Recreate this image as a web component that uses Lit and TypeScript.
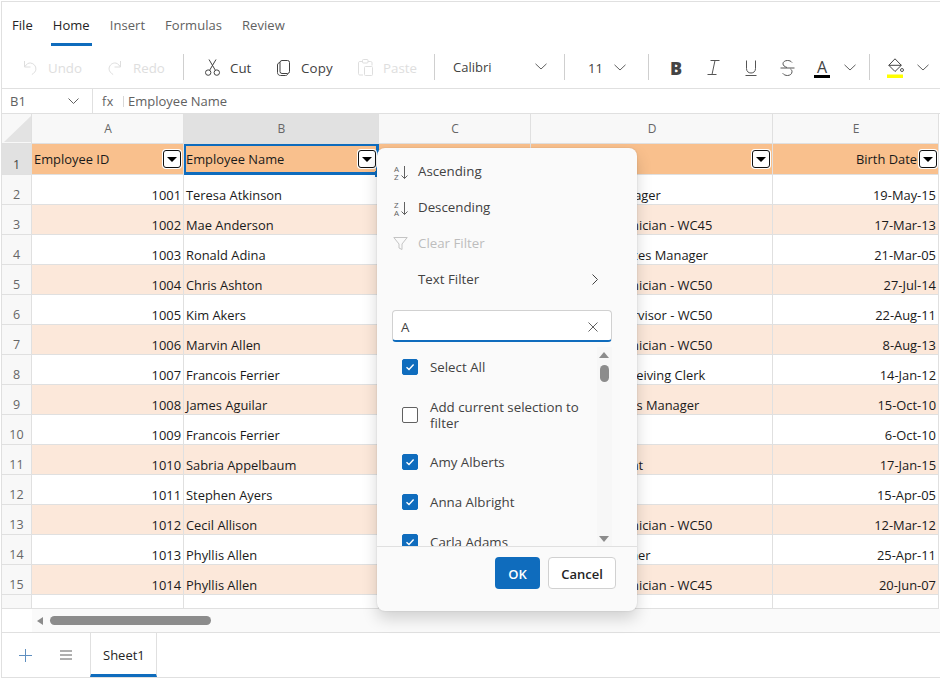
import { LitElement, html, css, svg } from "lit";
import { customElement } from "lit/decorators.js";

const rows: [number, string, string, string][] = [
  [1001, "Teresa Atkinson", "Engineering Manager", "19-May-15"],
  [1002, "Mae Anderson", "Production Technician - WC45", "17-Mar-13"],
  [1003, "Ronald Adina", "Production Services Manager", "21-Mar-05"],
  [1004, "Chris Ashton", "Production Technician - WC50", "27-Jul-14"],
  [1005, "Kim Akers", "Production Supervisor - WC50", "22-Aug-11"],
  [1006, "Marvin Allen", "Production Technician - WC50", "8-Aug-13"],
  [1007, "Francois Ferrier", "Shipping and Receiving Clerk", "14-Jan-12"],
  [1008, "James Aguilar", "Human Resources Manager", "15-Oct-10"],
  [1009, "Francois Ferrier", "Buyer", "6-Oct-10"],
  [1010, "Sabria Appelbaum", "Senior Accountant", "17-Jan-15"],
  [1011, "Stephen Ayers", "Janitor", "15-Apr-05"],
  [1012, "Cecil Allison", "Production Technician - WC50", "12-Mar-12"],
  [1013, "Phyllis Allen", "Marketing Designer", "25-Apr-11"],
  [1014, "Phyllis Allen", "Production Technician - WC45", "20-Jun-07"],
];

const ico = (w: number, h: number, body: unknown, cls = "") =>
  html`<svg class="ico ${cls}" width=${w} height=${h} viewBox="0 0 ${w} ${h}" fill="none" stroke="currentColor" stroke-width="1">${body}</svg>`;

const chevron = ico(12, 7, svg`<path d="M.5 .8 6 6 11.5 .8"/>`, "chev");
const filterBtn = html`<span class="fbtn"><i></i></span>`;

const check = html`<span class="cb on"><svg width="10" height="8" viewBox="0 0 10 8" fill="none" stroke="#fff" stroke-width="1.4"><path d="M1.500 4.200 4 6.500 8.600 1.600"/></svg></span>`;

@customElement("app-root")
export class AppRoot extends LitElement {
  static styles = css`
    :host { display: block; width: 940px; height: 682px; background: #fff; overflow: hidden;
      font-family: "Open Sans", "Noto Sans", sans-serif; font-size: 13px; color: #242424; padding: 1px 0 0 1px; box-sizing: border-box; }
    * { box-sizing: border-box; }
    .sheet { position: relative; width: 939px; height: 677px; border: 1px solid #e0e0e0; border-right-width: 0; display: flex; flex-direction: column; }
    .ico { display: block; flex: none; overflow: visible; }

    .tabs { height: 44px; flex: none; display: flex; gap: 16px; padding-left: 8px; }
    .tab { padding: 14px 2px 0; height: 44px; color: #616161; letter-spacing: .05px; }
    .tab.file { color: #242424; }
    .tab.cur { color: #242424; border-bottom: 3px solid #0f6cbd; }

    .toolbar { height: 43px; flex: none; border-bottom: 1px solid #e0e0e0; display: grid; align-items: center;
      grid-template-columns: 85px 76px 22px 72px 81px 76px 19px 111px 24px 60px 23px 36px 38px 35px 34px 30px 25px 18px 30px 20px;
      padding-left: 20px; padding-top: 1px; font-size: 13.3px; }
    .tb { display: flex; align-items: center; gap: 10px; color: #424242; white-space: nowrap; }
    .tb.wide { gap: 11px; letter-spacing: .15px; }
    .tb.off { color: #dedede; }
    .tb.sel { justify-content: space-between; color: #424242; }
    .tb.cal { width: 94px; position: relative; top: -1px; font-size: 13px; }
    .tb.siz { width: 38px; font-size: 13px; }
    .tb.ic { color: #555; }
    .sep { width: 1px; height: 26px; background: #cfcfcf; position: relative; top: -1px; }
    .bold { font-weight: 800; font-size: 18px; line-height: 20px; color: #444; margin-left: -1px; }
    .acol { display: flex; flex-direction: column; align-items: center; width: 16px; height: 20px; position: relative; top: 1px; }
    .acol b { font-weight: 400; font-size: 16px; line-height: 16px; color: #444; }
    .acol i { display: block; width: 16px; height: 3px; background: #000; }
    .chev { color: #616161; }

    .fbar { height: 25px; flex: none; border-bottom: 1px solid #e0e0e0; display: flex; align-items: center; color: #616161; }
    .addr { width: 91px; height: 24px; padding: 0 13px 0 8px; display: flex; align-items: center; justify-content: space-between; border-right: 1px solid #e0e0e0; }
    .fx { margin-left: 9px; width: 22px; height: 11px; border-right: 1px solid #d8d8d8; display: flex; align-items: center; font-size: 12.5px; letter-spacing: .5px; }
    .ftext { margin-left: 4px; }

    .grid { height: 495px; flex: none; display: grid; overflow: hidden; color: #1a1a1a; line-height: 18px; font-size: 12.9px;
      grid-template-columns: 30px 152px 195px 152px 242px 166px;
      grid-template-rows: 30px 31px repeat(14, 30px) 14px; }
    .c { border-right: 1px solid #e0e0e0; border-bottom: 1px solid #e0e0e0; padding: 0 2px; display: flex; align-items: flex-end; white-space: nowrap; overflow: hidden; min-width: 0; }
    .c.r { justify-content: flex-end; }
    .c.alt { background: #fce8da; }
    .hd { background: #f8f8f8; color: #666; justify-content: center; align-items: center; font-size: 12px; padding-left: 3px; }
    .hd.sel { background: #e1e1e1; }
    .rh { background: #f8f8f8; color: #666; justify-content: center; font-size: 12.5px; }
    .rh.sel { background: #e1e1e1; color: #444; }
    .corner { padding: 1px; align-items: stretch; background: #f8f8f8; }
    .orange { background: #f9c08d; align-items: center; justify-content: space-between; }
    .orange.r { justify-content: flex-end; gap: 2px; padding-right: 1px; }
    .active { box-shadow: inset 0 0 0 2px #0f6cbd; border-color: #0f6cbd; }
    .fbtn { flex: none; width: 18px; height: 18px; background: #fff; border: 1px solid #111; border-radius: 3px; display: flex; align-items: center; justify-content: center; box-shadow: 0 0 0 1px #fff; }
    .fbtn i { width: 0; height: 0; border-left: 5px solid transparent; border-right: 5px solid transparent; border-top: 5px solid #000; margin-top: 1px; }
    .handle { position: absolute; left: 373px; top: 169px; width: 4px; height: 6px; background: #0f6cbd; }

    .hs { height: 24px; flex: none; border-bottom: 1px solid #e0e0e0; background: #fafafa; display: flex; align-items: center; }
    .hs .l { width: 30px; height: 100%; background: #fff; }
    .hs .arr { margin-left: 5px; width: 0; height: 0; border-top: 4px solid transparent; border-bottom: 4px solid transparent; border-right: 6px solid #8c8c8c; }
    .hs .th { margin-left: 7px; width: 161px; height: 9px; border-radius: 5px; background: #8c8c8c; }

    .stabs { flex: 1; min-height: 0; display: flex; align-items: center; }
    .plus { margin-left: 17px; color: #5f8fc0; }
    .menu { margin-left: 28px; color: #616161; }
    .stab { margin-left: 18px; width: 67px; height: 100%; border-left: 1px solid #e0e0e0; border-right: 1px solid #e0e0e0; border-bottom: 3px solid #0f6cbd; padding: 3px 0 0 12px; display: flex; align-items: center; color: #242424; }

    .pop { position: absolute; left: 375px; top: 146px; width: 260px; height: 463px; background: #fafafa; border-radius: 8px;
      box-shadow: 0 0 2px rgba(0,0,0,.14), 0 8px 16px rgba(0,0,0,.16); color: #424242; display: flex; flex-direction: column; padding-top: 5px; overflow: hidden; font-size: 13.3px; }
    .mi { height: 36px; flex: none; display: flex; align-items: center; padding: 0 39px 0 41px; position: relative; justify-content: space-between; }
    .mi .ico.lead { position: absolute; left: 16px; top: 9px; color: #616161; }
    .mi.off { color: #bdbdbd; }
    .mi.off .ico.lead { color: #c4c4c4; top: 11px; }
    .mi svg text { font-family: "Open Sans", sans-serif; font-size: 8px; fill: #616161; stroke: none; }
    .search { margin: 13px 0 0 15px; width: 220px; height: 32px; flex: none; background: #fff; border: 1px solid #d1d1d1; border-bottom: 2px solid #0f6cbd; border-radius: 4px; display: flex; align-items: center; justify-content: space-between; padding: 2px 13px 0 8px; color: #424242; }
    .search .ico { color: #616161; }
    .listwrap { position: relative; margin-top: 5px; height: 200px; flex: none; overflow: hidden; border-bottom: 1px solid #e0e0e0; }
    .li { height: 40px; display: flex; align-items: center; gap: 12px; padding-left: 25px; width: 220px; }
    .li.two { height: 55px; line-height: 16px; }
    .cb { flex: none; width: 16px; height: 16px; border-radius: 2px; border: 1px solid #616161; background: #fff; display: flex; align-items: center; justify-content: center; }
    .cb.on { background: #0f6cbd; border-color: #0f6cbd; }
    .vs { position: absolute; left: 220px; top: 0; bottom: 0; width: 15px; background: #f7f7f7; }
    .vs .u, .vs .d { position: absolute; left: 2px; width: 0; height: 0; border-left: 5px solid transparent; border-right: 5px solid transparent; }
    .vs .u { top: 5px; border-bottom: 6px solid #8c8c8c; }
    .vs .d { top: 189px; border-top: 6px solid #8c8c8c; }
    .vs .t { position: absolute; left: 3px; top: 18px; width: 9px; height: 17px; border-radius: 5px; background: #8c8c8c; }
    .foot { flex: 1; display: flex; justify-content: flex-end; gap: 8px; padding: 10px 21px 0 0; }
    .btn { height: 32px; border-radius: 4px; display: flex; align-items: center; justify-content: center; font-weight: 600; font-size: 13px; padding-top: 1px; }
    .ok { width: 45px; background: #0f6cbd; color: #fff; }
    .cancel { width: 68px; background: #fff; border: 1px solid #d1d1d1; color: #242424; }
  `;

  private topbar() {
    return html`
      <div class="tabs">
        <div class="tab file">File</div><div class="tab cur">Home</div><div class="tab">Insert</div><div class="tab">Formulas</div><div class="tab">Review</div>
      </div>
      <div class="toolbar">
        <div class="tb off">${ico(16, 16, svg`<path d="M2.500 1v6h6"/><path d="M2.800 6.800C4.400 4 6.500 2.800 8.500 3c3.400.4 5.600 3.200 5.400 6.200-.2 2.200-1.800 4-4 5.300"/>`)}<span>Undo</span></div>
        <div class="tb off">${ico(16, 16, svg`<path d="M13.500 1v6h-6"/><path d="M13.200 6.800C11.600 4 9.500 2.800 7.500 3c-3.400.4-5.600 3.200-5.400 6.200.2 2.200 1.800 4 4 5.300"/>`)}<span>Redo</span></div>
        <div class="sep"></div>
        <div class="tb">${ico(15, 17, svg`<circle cx="3.200" cy="13.600" r="2.700"/><circle cx="11.800" cy="13.600" r="2.700"/><path d="M4.600 11.300 11 .5M10.400 11.300 4 .5"/>`)}<span>Cut</span></div>
        <div class="tb wide">${ico(13, 16, svg`<rect x="3" y=".5" width="9.500" height="13" rx="2"/><path d="M3 2.500C1.500 2.800.5 3.600.5 5v7.500c0 2 1.500 3 3 3h5c1 0 2-.6 2.300-1.600"/>`)}<span>Copy</span></div>
        <div class="tb off">${ico(15, 17, svg`<path d="M4.500 2.500H2c-1 0-1.500.5-1.500 1.500v10.500c0 1 .5 1.500 1.500 1.500h3"/><path d="M10 2.500h2.500c1 0 1.500.5 1.500 1.500v2.500"/><rect x="4.500" y=".5" width="5.500" height="3.500" rx="1"/><rect x="6.500" y="7.500" width="8" height="9" rx="1"/>`)}<span>Paste</span></div>
        <div class="sep"></div>
        <div class="tb sel cal"><span>Calibri</span>${chevron}</div>
        <div class="sep"></div>
        <div class="tb sel siz"><span>11</span>${chevron}</div>
        <div class="sep"></div>
        <div class="tb ic"><span class="bold">B</span></div>
        <div class="tb ic">${ico(13, 15, svg`<path d="M3.500 .5H12.500M.5 14.500H9.500M8 .5 5 14.500"/>`)}</div>
        <div class="tb ic">${ico(12, 16, svg`<path d="M1.500 .5v8c0 3 2 4.500 4.500 4.500s4.500-1.500 4.500-4.500v-8M.5 15.500h11"/>`)}</div>
        <div class="tb ic">${ico(15, 16, svg`<path d="M12 2.500C11 1.200 9.500.5 7.500.5 5 .5 3 1.800 3 3.800c0 1.700 1.500 2.800 4 3.700M.5 8h14M10.500 9c1 .7 1.500 1.600 1.500 2.700 0 2.300-2 3.800-4.500 3.800-2 0-3.700-.8-4.800-2.200"/>`)}</div>
        <div class="tb"><div class="acol"><b>A</b><i></i></div></div>
        <div class="tb">${chevron}</div>
        <div class="sep"></div>
        <div class="tb">${ico(17, 20, svg`<path d="M8 .8 14.300 7.300 8 13.500 1.800 7.300Z" stroke="#444"/><path d="M1.800 7.300H14.300" stroke="#444"/><circle cx="15" cy="12" r="1.500" stroke="#555"/><rect x="0" y="16.500" width="16" height="3.500" fill="#ffff00" stroke="none"/>`)}</div>
        <div class="tb">${chevron}</div>
      </div>
      <div class="fbar">
        <div class="addr"><span>B1</span>${ico(11, 6, svg`<path d="M.5 .5 5.500 5.500 10.500 .5"/>`)}</div>
        <div class="fx">fx</div>
        <div class="ftext">Employee Name</div>
      </div>`;
  }

  private gridView() {
    return html`<div class="grid">
      <div class="c corner">${ico(29, 28, svg`<path d="M28 1V27H1Z" fill="#e3e3e3" stroke="none"/>`)}</div>
      ${["A", "B", "C", "D", "E"].map((l) => html`<div class="c hd ${l === "B" ? "sel" : ""}">${l}</div>`)}
      <div class="c rh sel">1</div>
      <div class="c orange"><span>Employee ID</span>${filterBtn}</div>
      <div class="c orange active"><span>Employee Name</span>${filterBtn}</div>
      <div class="c orange"></div>
      <div class="c orange"><span></span>${filterBtn}</div>
      <div class="c orange r"><span>Birth Date</span>${filterBtn}</div>
      ${rows.map((r, i) => {
        const alt = i % 2 === 1 ? "alt" : "";
        return html`<div class="c rh">${i + 2}</div>
          <div class="c r ${alt}">${r[0]}</div>
          <div class="c ${alt}">${r[1]}</div>
          <div class="c ${alt}"></div>
          <div class="c ${alt}">${r[2]}</div>
          <div class="c r ${alt}">${r[3]}</div>`;
      })}
      <div class="c rh"></div><div class="c"></div><div class="c"></div><div class="c"></div><div class="c"></div><div class="c"></div>
    </div>`;
  }

  private popup() {
    return html`<div class="pop">
      <div class="mi">${ico(16, 18, svg`<text x="1" y="9.500">A</text><text x="1" y="17.500">Z</text><path d="M11.500 4v12.500M8.500 13.500l3 3 3-3"/>`, "lead")}<span>Ascending</span></div>
      <div class="mi">${ico(16, 18, svg`<text x="1" y="9.500">Z</text><text x="1" y="17.500">A</text><path d="M11.500 4v12.500M8.500 13.500l3 3 3-3"/>`, "lead")}<span>Descending</span></div>
      <div class="mi off">${ico(15, 15, svg`<path d="M.8 1.500h13.400L9 8v5.500L6 12V8Z"/>`, "lead")}<span>Clear Filter</span></div>
      <div class="mi"><span>Text Filter</span>${ico(6, 11, svg`<path d="M.5 .5 5.500 5.500 .5 10.500"/>`)}</div>
      <div class="search"><span>A</span>${ico(10, 10, svg`<path d="M.5 .5 9.500 9.500M9.500 .5 .5 9.500"/>`)}</div>
      <div class="listwrap">
        <div class="li">${check}<span>Select All</span></div>
        <div class="li two"><span class="cb"></span><span>Add current selection to<br />filter</span></div>
        <div class="li">${check}<span>Amy Alberts</span></div>
        <div class="li">${check}<span>Anna Albright</span></div>
        <div class="li">${check}<span>Carla Adams</span></div>
        <div class="vs"><i class="u"></i><i class="t"></i><i class="d"></i></div>
      </div>
      <div class="foot"><div class="btn ok">OK</div><div class="btn cancel">Cancel</div></div>
    </div>`;
  }

  render() {
    return html`<div class="sheet">
      ${this.topbar()}
      ${this.gridView()}
      <div class="hs"><div class="l"></div><i class="arr"></i><i class="th"></i></div>
      <div class="stabs">
        <span class="plus">${ico(13, 13, svg`<path d="M6.500 0v13M0 6.500h13"/>`)}</span>
        <span class="menu">${ico(12, 10, svg`<path d="M0 1h12M0 5h12M0 9h12"/>`)}</span>
        <div class="stab">Sheet1</div>
      </div>
      <div class="handle"></div>
      ${this.popup()}
    </div>`;
  }
}
